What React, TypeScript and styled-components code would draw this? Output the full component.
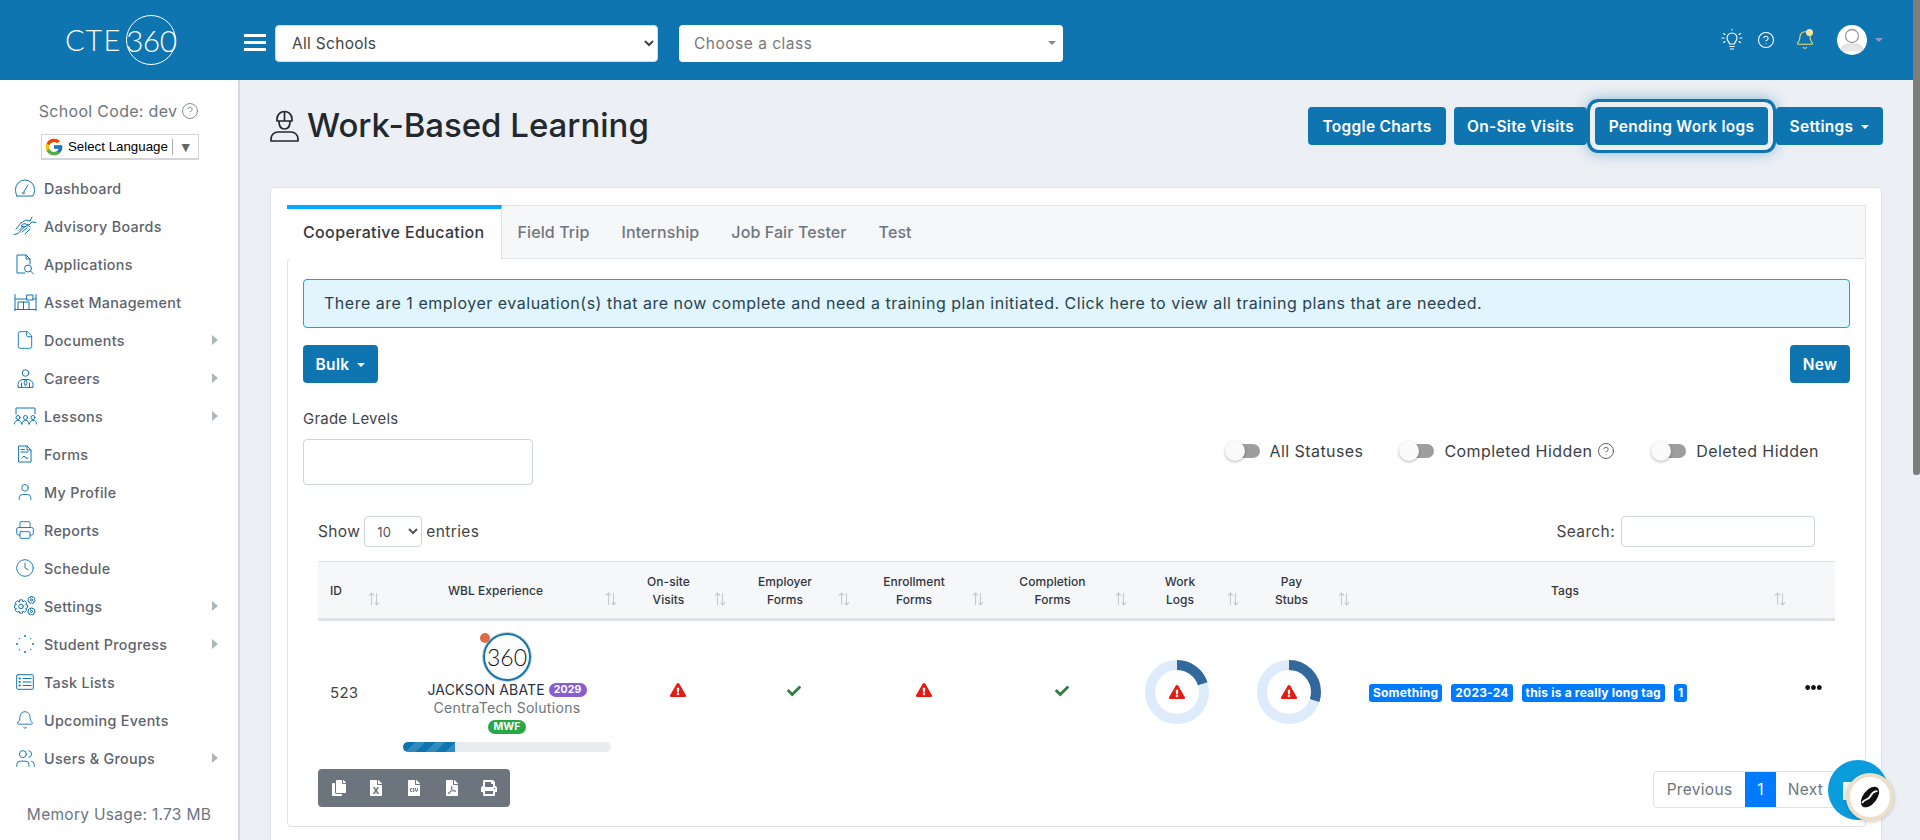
import React from "react";
import styled, { createGlobalStyle } from "styled-components";
import { FaCopy, FaFileExcel, FaFileCsv, FaFilePdf, FaPrint, FaExclamationTriangle, FaCheck, FaEllipsisH } from "react-icons/fa";
import { FcGoogle } from "react-icons/fc";
import { File, Printer, Clock, Bell, User, Users, CircleHelp } from "lucide-react";

const FONT = `Inter, "Open Sans", "Liberation Sans", sans-serif`;
const BLUE = "#0f75b1";

const Global = createGlobalStyle`
  html, body { margin: 0; padding: 0; height: 840px; overflow: hidden; background: #eceff4; }
  body { font-family: ${FONT}; color: #333; }
  * { box-sizing: border-box; }
`;

const Page = styled.div`
  position: relative;
  width: 1920px;
  height: 840px;
  overflow: hidden;
  display: flex;
  flex-direction: column;
`;
const Topbar = styled.header`
  height: 80px;
  flex: none;
  background: ${BLUE};
  border-bottom: 1px solid #3f5fa8;
  display: flex;
  align-items: center;
  color: #fff;
`;
const LogoArea = styled.div`
  width: 244px;
  padding-left: 65px;
  display: flex;
  align-items: center;
  gap: 5px;
`;
const LogoCte = styled.span`
  font-family: Lato, sans-serif;
  font-weight: 300;
  font-size: 29px;
  letter-spacing: 1px;
  line-height: 1;
`;
const LogoRing = styled.span`
  width: 50px;
  height: 50px;
  border: 1.5px solid #fff;
  border-radius: 50%;
  display: flex;
  align-items: center;
  justify-content: center;
  font-family: Lato, sans-serif;
  font-weight: 300;
  font-size: 30px;
  letter-spacing: -0.5px;
`;
const Burger = styled.button`
  width: 22px;
  height: 17px;
  padding: 0;
  border: 0;
  margin: 5px 9px 0 0;
  background: linear-gradient(#fff 0 3px, transparent 3px 7px, #fff 7px 10px, transparent 10px 14px, #fff 14px 17px);
`;
const SchoolSelect = styled.select`
  width: 383px;
  height: 37px;
  border: 1px solid #d5dae2;
  border-radius: 4px;
  background: #fff;
  color: #444;
  font: 400 15.5px ${FONT};
  letter-spacing: 0.3px;
  padding-left: 12px;
  margin: 7px 21px 0 0;
`;
const ClassPicker = styled.div`
  position: relative;
  width: 384px;
  height: 37px;
  margin-top: 7px;
  border-radius: 4px;
  background: #fff;
  color: #777;
  font-size: 15.5px;
  letter-spacing: 0.5px;
  line-height: 38px;
  padding-left: 15px;
  &::after {
    content: "";
    position: absolute;
    right: 7px;
    top: 16px;
    border: 4px solid transparent;
    border-top-color: #888;
  }
`;
const TopIcons = styled.div`
  margin-left: auto;
  margin-right: 37px;
  display: flex;
  align-items: center;
`;
const TopIconBox = styled.span<{ $w: number }>`
  width: ${(p) => p.$w}px;
  display: flex;
  justify-content: center;
  position: relative;
`;
const BellDot = styled.span`
  position: absolute;
  width: 7px;
  height: 7px;
  border-radius: 50%;
  background: #f9e39a;
  top: -1px;
  right: 14px;
`;
const AvatarDisc = styled.span`
  width: 30px;
  height: 30px;
  border-radius: 50%;
  background: #fff;
  overflow: hidden;
  display: block;
  margin-left: 10px;
`;
const AvatarCaret = styled.span`
  width: 0;
  height: 0;
  border: 4px solid transparent;
  border-top-color: #8f98c4;
  margin: 5px 0 0 8px;
`;

const Body = styled.div`
  flex: 1;
  display: flex;
  min-height: 0;
`;
const Sidebar = styled.aside`
  width: 240px;
  flex: none;
  background: #fff;
  border-right: 2px solid #d3d9e2;
  padding-top: 20px;
  color: #6a6f78;
`;
const SchoolCode = styled.div`
  height: 22px;
  display: flex;
  align-items: center;
  justify-content: center;
  gap: 4px;
  font-size: 16px;
  letter-spacing: 0.3px;
  color: #70757c;
`;
const TranslateBox = styled.div`
  width: 158px;
  height: 26px;
  margin: 12px 0 9px 41px;
  border: 1px solid #d5d5d5;
  border-width: 1px 1px 2px 1px;
  display: flex;
  align-items: center;
  font: 400 13.3px "Liberation Sans", sans-serif;
  color: #000;
  padding-left: 2px;
  gap: 4px;
`;
const TranslateArrow = styled.span`
  border-left: 1px solid #aaa;
  margin-left: 0;
  padding-left: 6px;
  height: 16px;
  line-height: 16px;
  font-size: 14px;
  color: #666;
`;
const MenuRow = styled.div`
  height: 38px;
  display: flex;
  align-items: center;
  padding-left: 13px;
  font-size: 14.3px;
  font-weight: 500;
  letter-spacing: 0.32px;
  color: #5d636b;
`;
const MenuIcon = styled.span`
  width: 24px;
  height: 24px;
  margin-right: 7px;
  display: flex;
  align-items: center;
  justify-content: center;
  color: ${BLUE};
`;
const MenuChevron = styled.span`
  margin-left: auto;
  margin-right: 20px;
  border: 5px solid transparent;
  border-left: 6px solid #aeb6bd;
  border-right: 0;
`;
const Memory = styled.div`
  margin-top: 27px;
  line-height: 22px;
  text-align: center;
  font-size: 15.5px;
  letter-spacing: 0.3px;
  color: #6b7480;
`;

const Main = styled.main`
  flex: 1;
  min-width: 0;
  padding: 27px 38px 0 30px;
`;
const TitleRow = styled.div`
  height: 38px;
  display: flex;
  align-items: center;
  justify-content: space-between;
  margin-right: -1px;
`;
const TitleGroup = styled.div`
  display: flex;
  align-items: center;
  gap: 8px;
`;
const Title = styled.h1`
  margin: 0 0 2px;
  font-size: 33px;
  font-weight: 500;
  letter-spacing: -0.02px;
  color: #23272e;
  line-height: 38px;
`;
const ButtonRow = styled.div`
  display: flex;
  gap: 8px;
`;
const Btn = styled.button<{ $focus?: boolean; $w: number }>`
  width: ${(p) => p.$w}px;
  height: 38px;
  border: 0;
  border-radius: 4px;
  background: ${BLUE};
  color: #fff;
  font: 600 15.5px ${FONT};
  letter-spacing: 0.3px;
  padding: 0;
  display: inline-flex;
  align-items: center;
  justify-content: center;
  gap: 8px;
  ${(p) => p.$focus && `box-shadow: 0 0 0 5px #eceff4, 0 0 0 8px ${BLUE}, 0 0 14px 8px rgba(15,117,177,.45); position: relative;`}
`;
const BtnCaret = styled.span`
  border: 4px solid transparent;
  border-top-color: #fff;
  margin-top: 5px;
`;
const Card = styled.section`
  margin-top: 42px;
  height: 700px;
  background: #fff;
  border: 1px solid #dfe3e8;
  border-radius: 4px;
  padding: 17px 15px 17px 16px;
`;
const Tabs = styled.nav`
  height: 53px;
  display: flex;
  background: #f5f7f9;
  border: 1px solid #dfe3e8;
  border-bottom: 0;
`;
const Tab = styled.div<{ $active?: boolean }>`
  padding: 0 16px ${(p) => (p.$active ? "5px" : "0")};
  margin-left: ${(p) => (p.$active ? "-1px" : "0")};
  margin-top: ${(p) => (p.$active ? "-1px" : "0")};
  display: flex;
  align-items: center;
  font-size: 16px;
  font-weight: 500;
  letter-spacing: ${(p) => (p.$active ? "0.36px" : "0.1px")};
  color: ${(p) => (p.$active ? "#343a40" : "#70767e")};
  background: ${(p) => (p.$active ? "#fff" : "transparent")};
  border-top: ${(p) => (p.$active ? "4px solid #00a8ff" : "0")};
  border-right: ${(p) => (p.$active ? "1px solid #dfe3e8" : "0")};
  height: ${(p) => (p.$active ? "54px" : "auto")};
`;
const Pane = styled.div`
  height: 569px;
  border: 1px solid #dfe3e8;
  border-radius: 4px;
  padding: 20px 15px;
`;
const Alert = styled.div`
  height: 49px;
  border: 1px solid #03a9f4;
  border-radius: 4px;
  background: #e1f5fe;
  color: #29424f;
  font-size: 16px;
  letter-spacing: 0.51px;
  line-height: 47px;
  padding-left: 20px;
  white-space: nowrap;
`;
const BulkRow = styled.div`
  margin-top: 17px;
  display: flex;
  justify-content: space-between;
`;
const FilterRow = styled.div`
  margin-top: 25px;
  display: flex;
  justify-content: space-between;
`;
const GradeLabel = styled.div`
  font-size: 15px;
  letter-spacing: 0.22px;
  line-height: 22px;
  color: #444;
  margin-bottom: 9px;
`;
const GradeInput = styled.div`
  width: 230px;
  height: 46px;
  border: 1px solid #ced4da;
  border-radius: 4px;
`;
const Toggles = styled.div`
  display: flex;
  align-items: center;
  padding: 8px 31px 0 0;
  font-size: 16px;
  letter-spacing: 0.42px;
  color: #3a3f46;
`;
const ToggleItem = styled.label`
  display: flex;
  align-items: center;
  margin-left: 36px;
`;
const Track = styled.span`
  position: relative;
  width: 25px;
  height: 14px;
  border-radius: 7px;
  background: #9e9e9e;
  margin: 0 10px 0 10px;
  &::before {
    content: "";
    position: absolute;
    left: -10px;
    top: -3px;
    width: 20px;
    height: 20px;
    border-radius: 50%;
    background: #fafafa;
    box-shadow: 0 1px 3px rgba(0,0,0,.3);
  }
`;
const TableArea = styled.div`
  margin-top: 31px;
  padding: 0 14px 0 15px;
`;
const Controls = styled.div`
  height: 31px;
  display: flex;
  justify-content: space-between;
  align-items: center;
  font-size: 15.5px;
  letter-spacing: 0.38px;
  color: #444;
`;
const ShowGroup = styled.div`
  display: flex;
  align-items: center;
  gap: 4px;
`;
const EntrySelect = styled.select`
  width: 58px;
  height: 31px;
  border: 1px solid #ced4da;
  border-radius: 4px;
  background: #fff;
  font: 400 13px ${FONT};
  color: #555;
  padding-left: 8px;
`;
const SearchGroup = styled.div`
  display: flex;
  align-items: center;
  gap: 6px;
  padding-right: 21px;
`;
const SearchInput = styled.div`
  width: 194px;
  height: 31px;
  border: 1px solid #ced4da;
  border-radius: 4px;
`;
const Table = styled.table`
  margin-top: 14px;
  width: 1517px;
  table-layout: fixed;
  border-collapse: collapse;
`;
const Th = styled.th<{ $left?: boolean }>`
  position: relative;
  height: 58px;
  padding: 1px 30px 0 12px;
  background: #f6f7f9;
  border-top: 1px solid #dee2e6;
  border-bottom: 3px solid #dee2e6;
  font-size: 12px;
  font-weight: 500;
  letter-spacing: 0.05px;
  line-height: 18px;
  color: #30353c;
  text-align: ${(p) => (p.$left ? "left" : "center")};
`;
const SortMark = styled.svg`
  position: absolute;
  right: 6px;
  top: 30px;
`;
const Td = styled.td<{ $left?: boolean }>`
  height: 144px;
  padding: 0;
  text-align: ${(p) => (p.$left ? "left" : "center")};
  vertical-align: middle;
`;
const IdCell = styled.span`
  padding-left: 12px;
  font-size: 15px;
  letter-spacing: 0.3px;
  color: #444;
`;
const PersonBlock = styled.div`
  width: 208px;
  margin-left: 17px;
  display: flex;
  flex-direction: column;
  align-items: center;
`;
const PersonAvatar = styled.div`
  position: relative;
  width: 48px;
  height: 48px;
  border-radius: 50%;
  border: 2px solid ${BLUE};
  box-shadow: 0 0 0 1px #ccc;
  display: flex;
  align-items: center;
  justify-content: center;
  font-family: Lato, sans-serif;
  font-weight: 300;
  font-size: 23px;
  color: #111;
`;
const PersonDot = styled.span`
  position: absolute;
  width: 10px;
  height: 10px;
  border-radius: 50%;
  background: #dd6b46;
  left: -5px;
  top: -2px;
`;
const NameRow = styled.div`
  display: flex;
  align-items: center;
  gap: 4px;
  height: 18px;
  font-size: 14px;
  letter-spacing: 0.15px;
  color: #2a3040;
  white-space: nowrap;
`;
const YearBadge = styled.span`
  padding: 0 5px;
  height: 14px;
  line-height: 14px;
  border-radius: 7px;
  background: #8a5ccf;
  color: #fff;
  font-size: 10.5px;
  font-weight: 700;
`;
const Company = styled.div`
  height: 18px;
  line-height: 18px;
  font-size: 14px;
  letter-spacing: 0.3px;
  color: #6c757d;
`;
const DayBadge = styled.span`
  margin-top: 3px;
  padding: 0 6px;
  height: 14px;
  line-height: 14px;
  border-radius: 7px;
  background: #28a745;
  color: #fff;
  font-size: 10.5px;
  font-weight: 700;
`;
const ProgressTrack = styled.div`
  width: 208px;
  height: 10px;
  margin-top: 8px;
  border-radius: 5px;
  background: #e9ecef;
  overflow: hidden;
`;
const ProgressFill = styled.div`
  height: 100%;
  background-color: ${BLUE};
  background-image: repeating-linear-gradient(-45deg, rgba(255,255,255,.15) 0 7px, transparent 7px 14px);
`;
const WarnMark = styled.span<{ $dx: number }>`
  color: #e51a12;
  font-size: 16px;
  display: inline-flex;
  margin-left: ${(p) => p.$dx}px;
`;
const CheckMark = styled.span<{ $dx: number }>`
  color: #2f7d3f;
  font-size: 14px;
  display: inline-flex;
  margin-left: ${(p) => p.$dx}px;
`;
const DonutBox = styled.div<{ $dx: number }>`
  position: relative;
  width: 64px;
  height: 64px;
  margin-left: ${(p) => p.$dx}px;
  display: flex;
  align-items: center;
  justify-content: center;
  color: #e51a12;
`;
const DonutSvg = styled.svg`
  position: absolute;
  inset: 0;
`;
const TagList = styled.div`
  display: flex;
  gap: 9px;
  padding: 1px 0 0 13px;
`;
const TagChip = styled.span`
  height: 18px;
  line-height: 18px;
  padding: 0 4px;
  border-radius: 3px;
  background: #007bff;
  color: #fff;
  font-size: 12px;
  font-weight: 700;
  letter-spacing: 0.2px;
  white-space: nowrap;
`;
const DotsMark = styled.span`
  color: #111;
  font-size: 17px;
  display: inline-flex;
  position: relative;
  top: -3px;
`;
const BottomRow = styled.div`
  margin-top: 5px;
  display: flex;
  justify-content: space-between;
`;
const ExportBar = styled.div`
  width: 192px;
  height: 38px;
  border-radius: 4px;
  background: #6c757d;
  color: #fff;
  display: flex;
  align-items: center;
  justify-content: space-around;
  padding: 0 2px 0 2px;
  font-size: 16px;
`;
const Pager = styled.div`
  height: 37px;
  margin-top: 2px;
  display: flex;
  border: 1px solid #dee2e6;
  border-radius: 4px;
  font-size: 15.5px;
  letter-spacing: 0.3px;
  color: #6c757d;
`;
const PagerCell = styled.span<{ $active?: boolean; $w: number }>`
  width: ${(p) => p.$w}px;
  display: flex;
  align-items: center;
  justify-content: center;
  background: ${(p) => (p.$active ? "#007bff" : "transparent")};
  color: ${(p) => (p.$active ? "#fff" : "inherit")};
`;
const ChatBubble = styled.div`
  position: absolute;
  left: 1828px;
  top: 760px;
  width: 60px;
  height: 60px;
  border-radius: 50%;
  background: #0b9ddb;
`;
const ChatFold = styled.span`
  position: absolute;
  left: 15px;
  top: 22px;
  width: 18px;
  height: 18px;
  background: #f4f6f8;
  border-radius: 1px;
`;
const BeanDisc = styled.div`
  position: absolute;
  left: 1846px;
  top: 773px;
  width: 48px;
  height: 48px;
  border-radius: 50%;
  background: #fff;
  border: 4px solid #ecdfc9;
  box-shadow: 0 1px 4px rgba(0,0,0,.2);
  display: flex;
  align-items: center;
  justify-content: center;
`;
const ScrollThumb = styled.div`
  position: absolute;
  right: 0;
  top: 0;
  width: 7px;
  height: 475px;
  background: #7d7d7d;
  border-radius: 0 0 3px 3px;
`;

const S = { fill: "none", stroke: "currentColor", strokeWidth: 1, strokeLinecap: "round", strokeLinejoin: "round" } as const;

const gearPath = (cx: number, cy: number, ro: number, ri: number, teeth: number) => {
  const pts: string[] = [];
  const step = (2 * Math.PI) / teeth;
  for (let i = 0; i < teeth; i++) {
    const a = i * step;
    [[ri, -0.5], [ro, -0.28], [ro, 0.28], [ri, 0.5]].forEach(([r, f]) => {
      const t = a + f * step;
      pts.push(`${(cx + r * Math.sin(t)).toFixed(2)} ${(cy - r * Math.cos(t)).toFixed(2)}`);
    });
  }
  return `M${pts.join("L")}z`;
};

const IconDash = () => (
  <svg width="22" height="20" viewBox="0 0 22 20" {...S}>
    <path d="M3 18h16c1-2 1.500-4 1.500-6.500a9.500 9.500 0 0 0-19 0C1.500 14 2 16 3 18z" />
    <path d="M9.500 14.500 14 7M8 15a2 2 0 0 0 3 0" />
  </svg>
);
const IconAdvisory = () => (
  <svg width="24" height="20" viewBox="0 0 24 20" {...S}>
    <path d="M1 18.500l4-1 7-7M3 13l5-6 5-3 4 1" />
    <path d="M23 6.500l-4-.5-3 3-5-1.500-3 2.500 3 1 4-1.500 2 1.500" />
    <path d="M9 16l5-4M12 18l5-5M6.500 14l4-4M17 5l2-4" />
  </svg>
);
const IconApps = () => (
  <svg width="18" height="21" viewBox="0 0 18 21" {...S}>
    <path d="M9 19H1V1h9l4 4v5M10 1v4h4" />
    <circle cx="12" cy="14.500" r="3.500" />
    <path d="M14.500 17l3 3" />
  </svg>
);
const IconAsset = () => (
  <svg width="23" height="17" viewBox="0 0 23 17" {...S}>
    <path d="M1 0v17M22 0v17M1 15.500h21M1 5h12M19 5h3M13 1h6v5h-6zM4 15.500V8h11v7.500M9.500 8v7.500" />
  </svg>
);
const IconCareer = () => (
  <svg width="17" height="19" viewBox="0 0 17 19" {...S}>
    <circle cx="8.500" cy="4" r="3.300" />
    <path d="M1 18v-2.500C1 12.500 3 11 6 10.500h5c3 .5 5 2 5 5V18zM8.500 10.500 7 14l1.500 3 1.500-3zM4.500 14v4M12.500 14v4" />
  </svg>
);
const IconLessons = () => (
  <svg width="23" height="18" viewBox="0 0 23 18" {...S}>
    <path d="M2 7V1h19v6" />
    <circle cx="4" cy="10.500" r="2" /><circle cx="11.500" cy="10.500" r="2" /><circle cx="19" cy="10.500" r="2" />
    <path d="M.5 17c0-2.500 1.500-3.500 3.500-3.500S7.500 14.500 7.500 17M8 17c0-2.500 1.500-3.500 3.500-3.500S15 14.500 15 17M15.500 17c0-2.500 1.500-3.500 3.500-3.500s3.500 1 3.500 3.500" />
  </svg>
);
const IconForms = () => (
  <svg width="14" height="18" viewBox="0 0 14 18" {...S}>
    <path d="M1 1h8l4 4v12H1zM9 1v4h4M3 4.500h3.500M3 7h7M4 13l2-2 2 2h2" />
  </svg>
);
const IconGears = () => (
  <svg width="22" height="20" viewBox="0 0 22 20" {...S}>
    <path d={gearPath(7, 10.500, 6.800, 5, 8)} />
    <circle cx="7" cy="10.500" r="2.300" />
    <path d={gearPath(17.500, 4, 3.600, 2.700, 7)} />
    <circle cx="17.500" cy="4" r="1" />
    <path d={gearPath(17.500, 15.500, 3.600, 2.700, 7)} />
    <circle cx="17.500" cy="15.500" r="1" />
  </svg>
);
const IconDots = () => (
  <svg width="18" height="18" viewBox="0 0 18 18" fill="currentColor">
    {[0, 45, 90, 135, 180, 225, 270, 315].map((a, i) => (
      <circle key={a} cx={9 + 8 * Math.sin((a * Math.PI) / 180)} cy={9 - 8 * Math.cos((a * Math.PI) / 180)} r={i % 2 ? 0.7 : 1} />
    ))}
  </svg>
);
const IconTasks = () => (
  <svg width="18" height="16" viewBox="0 0 18 16" {...S}>
    <rect x=".7" y=".7" width="16.600" height="14.600" rx="1" />
    <path d="M7 4.500h8M7 8h8M7 11.500h8" />
    <path d="M3.500 4.500h.4M3.500 8h.4M3.500 11.500h.4" strokeWidth="1.800" />
  </svg>
);
const IconWorker = () => (
  <svg width="29" height="32" viewBox="0 0 29 32" fill="none" stroke="#23272e" strokeWidth="1.700" strokeLinecap="round" strokeLinejoin="round">
    <path d="M7 9a7.500 7.500 0 0 1 15 0v2H7zM14.500 1.500V11" />
    <path d="M9 11.500c0 4.500 2 7.500 5.500 7.500s5.500-3 5.500-7.500" />
    <path d="M1 31v-2c0-4 3-7 7-7h13c4 0 7 3 7 7v2z" />
  </svg>
);
const IconBulb = () => (
  <svg width="22" height="22" viewBox="0 0 22 22" fill="none" stroke="#fff" strokeWidth="1.100" strokeLinecap="round" strokeLinejoin="round">
    <path d="M8.500 15c0-2-2.500-3-2.500-6a5 5 0 0 1 10 0c0 3-2.500 4-2.500 6zM8.800 17.500h4.400M9.500 20h3" />
    <path d="M2.500 4.500 4 5.500M19.500 4.500 18 5.500M1 9h2M19 9h2M2.500 13.500 4 12.500M19.500 13.500 18 12.500M11 0v1" />
  </svg>
);
const IconAvatar = () => (
  <svg width="30" height="30" viewBox="0 0 30 30" fill="none" stroke="#999" strokeWidth="1.300">
    <circle cx="15" cy="11" r="6.500" />
    <path d="M3 26c2-5 6-7 12-7s10 2 12 7" fill="#e8e8e8" stroke="#ddd" />
  </svg>
);
const IconBean = () => (
  <svg width="20" height="24" viewBox="0 0 20 24">
    <ellipse cx="10" cy="12" rx="6.800" ry="12" transform="rotate(38 10 12)" fill="#111" />
    <path d="M2 18c3-5 6-2 8.500-7s4-4 7-5" fill="none" stroke="#fff" strokeWidth="1.800" />
  </svg>
);

const ico = { size: 20, strokeWidth: 1.1 };
const items: { label: string; icon: React.ReactNode; more?: boolean }[] = [
  { label: "Dashboard", icon: <IconDash /> },
  { label: "Advisory Boards", icon: <IconAdvisory /> },
  { label: "Applications", icon: <IconApps /> },
  { label: "Asset Management", icon: <IconAsset /> },
  { label: "Documents", icon: <File {...ico} />, more: true },
  { label: "Careers", icon: <IconCareer />, more: true },
  { label: "Lessons", icon: <IconLessons />, more: true },
  { label: "Forms", icon: <IconForms /> },
  { label: "My Profile", icon: <User {...ico} /> },
  { label: "Reports", icon: <Printer {...ico} /> },
  { label: "Schedule", icon: <Clock {...ico} /> },
  { label: "Settings", icon: <IconGears />, more: true },
  { label: "Student Progress", icon: <IconDots />, more: true },
  { label: "Task Lists", icon: <IconTasks /> },
  { label: "Upcoming Events", icon: <Bell {...ico} /> },
  { label: "Users & Groups", icon: <Users {...ico} size={21} />, more: true },
];

const columns: { head: React.ReactNode; w: number; left?: boolean }[] = [
  { head: "ID", w: 68, left: true },
  { head: "WBL Experience", w: 237 },
  { head: <>On-site<br />Visits</>, w: 109 },
  { head: <>Employer<br />Forms</>, w: 124 },
  { head: <>Enrollment<br />Forms</>, w: 134 },
  { head: <>Completion<br />Forms</>, w: 143 },
  { head: <>Work<br />Logs</>, w: 112 },
  { head: <>Pay<br />Stubs</>, w: 111 },
  { head: "Tags", w: 436 },
];

const Sort = () => (
  <SortMark width="12" height="14" viewBox="0 0 12 14" fill="none" stroke="#c6cacf" strokeWidth="1.100">
    <path d="M3.500 13V1M1 3.500 3.500 1 6 3.500M8.500 1v12M6.500 10.500l2 2.500 2.500-2.500" />
  </SortMark>
);

const Donut = ({ pct, dx }: { pct: number; dx: number }) => {
  const r = 27;
  const c = 2 * Math.PI * r;
  return (
    <DonutBox $dx={dx}>
      <DonutSvg width="64" height="64" viewBox="0 0 64 64" fill="none" strokeWidth="10">
        <circle cx="32" cy="32" r={r} stroke="#ddebfb" />
        <circle cx="32" cy="32" r={r} stroke="#33689c" strokeDasharray={`${(c * pct) / 100} ${c}`} transform="rotate(-90 32 32)" />
      </DonutSvg>
      <FaExclamationTriangle size={16} />
    </DonutBox>
  );
};

export default function App() {
  return (
    <Page>
      <Global />
      <Topbar>
        <LogoArea>
          <LogoCte>CTE</LogoCte>
          <LogoRing>360</LogoRing>
        </LogoArea>
        <Burger aria-label="menu" />
        <SchoolSelect defaultValue="all"><option value="all">All Schools</option></SchoolSelect>
        <ClassPicker>Choose a class</ClassPicker>
        <TopIcons>
          <TopIconBox $w={34}><IconBulb /></TopIconBox>
          <TopIconBox $w={34}><CircleHelp size={18} strokeWidth={1.4} color="#fff" /></TopIconBox>
          <TopIconBox $w={44}><Bell size={20} strokeWidth={1.3} color="#f4dc6b" /><BellDot /></TopIconBox>
          <AvatarDisc><IconAvatar /></AvatarDisc>
          <AvatarCaret />
        </TopIcons>
      </Topbar>
      <Body>
        <Sidebar>
          <SchoolCode>School Code: dev <CircleHelp size={18} strokeWidth={1.1} /></SchoolCode>
          <TranslateBox><FcGoogle size={20} /> Select Language <TranslateArrow>▼</TranslateArrow></TranslateBox>
          {items.map((it) => (
            <MenuRow key={it.label}>
              <MenuIcon>{it.icon}</MenuIcon>
              {it.label}
              {it.more && <MenuChevron />}
            </MenuRow>
          ))}
          <Memory>Memory Usage: 1.73 MB</Memory>
        </Sidebar>
        <Main>
          <TitleRow>
            <TitleGroup>
              <IconWorker />
              <Title>Work-Based Learning</Title>
            </TitleGroup>
            <ButtonRow>
              <Btn $w={138}>Toggle Charts</Btn>
              <Btn $w={133}>On-Site Visits</Btn>
              <Btn $w={173} $focus>Pending Work logs</Btn>
              <Btn $w={107}>Settings <BtnCaret /></Btn>
            </ButtonRow>
          </TitleRow>
          <Card>
            <Tabs>
              <Tab $active>Cooperative Education</Tab>
              <Tab>Field Trip</Tab>
              <Tab>Internship</Tab>
              <Tab>Job Fair Tester</Tab>
              <Tab>Test</Tab>
            </Tabs>
            <Pane>
              <Alert>There are 1 employer evaluation(s) that are now complete and need a training plan initiated. Click here to view all training plans that are needed.</Alert>
              <BulkRow>
                <Btn $w={75}>Bulk <BtnCaret /></Btn>
                <Btn $w={60}>New</Btn>
              </BulkRow>
              <FilterRow>
                <div>
                  <GradeLabel>Grade Levels</GradeLabel>
                  <GradeInput />
                </div>
                <Toggles>
                  <ToggleItem><Track />All Statuses</ToggleItem>
                  <ToggleItem><Track />Completed Hidden&nbsp;<CircleHelp size={18} strokeWidth={1.1} /></ToggleItem>
                  <ToggleItem><Track />Deleted Hidden</ToggleItem>
                </Toggles>
              </FilterRow>
              <TableArea>
                <Controls>
                  <ShowGroup>Show <EntrySelect defaultValue="10"><option value="10">10</option></EntrySelect> entries</ShowGroup>
                  <SearchGroup>Search: <SearchInput /></SearchGroup>
                </Controls>
                <Table>
                  <colgroup>
                    {columns.map((c, i) => <col key={i} style={{ width: c.w }} />)}
                    <col style={{ width: 43 }} />
                  </colgroup>
                  <thead>
                    <tr>
                      {columns.map((c, i) => <Th key={i} $left={c.left}>{c.head}<Sort /></Th>)}
                      <Th />
                    </tr>
                  </thead>
                  <tbody>
                    <tr>
                      <Td $left><IdCell>523</IdCell></Td>
                      <Td $left>
                        <PersonBlock>
                          <PersonAvatar><PersonDot />360</PersonAvatar>
                          <NameRow>JACKSON ABATE <YearBadge>2029</YearBadge></NameRow>
                          <Company>CentraTech Solutions</Company>
                          <DayBadge>MWF</DayBadge>
                          <ProgressTrack><ProgressFill style={{ width: "25%" }} /></ProgressTrack>
                        </PersonBlock>
                      </Td>
                      <Td><WarnMark $dx={0}><FaExclamationTriangle /></WarnMark></Td>
                      <Td><CheckMark $dx={0}><FaCheck /></CheckMark></Td>
                      <Td><WarnMark $dx={2}><FaExclamationTriangle /></WarnMark></Td>
                      <Td><CheckMark $dx={0}><FaCheck /></CheckMark></Td>
                      <Td $left><Donut pct={20} dx={12} /></Td>
                      <Td $left><Donut pct={30} dx={12} /></Td>
                      <Td $left>
                        <TagList>
                          <TagChip>Something</TagChip>
                          <TagChip>2023-24</TagChip>
                          <TagChip>this is a really long tag</TagChip>
                          <TagChip>1</TagChip>
                        </TagList>
                      </Td>
                      <Td><DotsMark><FaEllipsisH /></DotsMark></Td>
                    </tr>
                  </tbody>
                </Table>
                <BottomRow>
                  <ExportBar>
                    <FaCopy /><FaFileExcel /><FaFileCsv /><FaFilePdf /><FaPrint />
                  </ExportBar>
                  <Pager>
                    <PagerCell $w={91}>Previous</PagerCell>
                    <PagerCell $w={31} $active>1</PagerCell>
                    <PagerCell $w={59}>Next</PagerCell>
                  </Pager>
                </BottomRow>
              </TableArea>
            </Pane>
          </Card>
        </Main>
      </Body>
      <ChatBubble><ChatFold /></ChatBubble>
      <BeanDisc><IconBean /></BeanDisc>
      <ScrollThumb />
    </Page>
  );
}
